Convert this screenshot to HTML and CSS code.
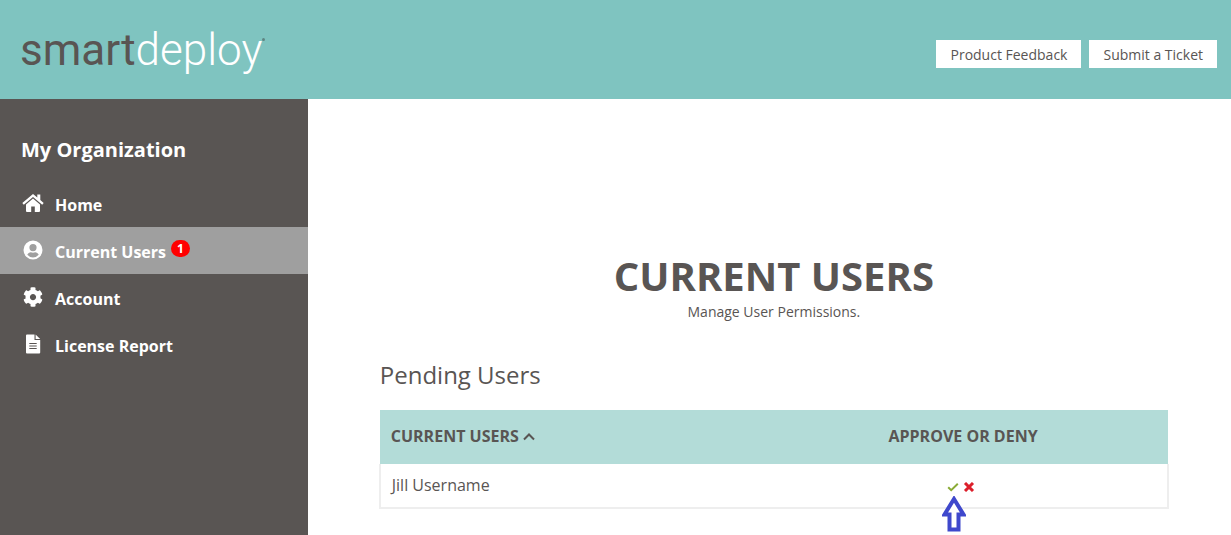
FILE: index.html
```html
<!DOCTYPE html>
<html lang="en">
<head>
<meta charset="utf-8">
<title>Current Users</title>
<link rel="stylesheet" href="styles.css">
</head>
<body>
<header class="topbar">
  <a class="logo" href="#"><span class="logo-dark">smart</span><span>deploy</span><span class="logo-mark"></span></a>
  <nav class="actions">
    <a class="action" href="#">Product Feedback</a>
    <a class="action" href="#">Submit a Ticket</a>
  </nav>
</header>
<div class="layout">
  <aside class="sidebar">
    <h2 class="side-title">My Organization</h2>
    <nav class="menu">
      <a class="item" href="#">
        <svg class="icon" viewBox="0 0 22 20"><path d="M11 1 .3 10l1.500 1.800L11 4.100l9.200 7.700 1.500-1.800L18.300 7V1.500h-3v3.100z"/><path d="M11 5.500 4 11.400V18q0 1 1 1h4.200v-5.500h3.600V19H17q1 0 1-1v-6.600z"/></svg>
        <span>Home</span>
      </a>
      <a class="item active" href="#">
        <svg class="icon" viewBox="0 0 22 20"><path fill-rule="evenodd" d="M11 .5a9.500 9.500 0 1 0 0 19 9.500 9.500 0 0 0 0-19zM11 4a3.600 3.600 0 1 1 0 7.200A3.600 3.600 0 0 1 11 4zM5.300 14.800c.8-1.700 2-2.600 3.500-2.600 1.500.6 2.900.6 4.400 0 1.500 0 2.700.9 3.500 2.600a7.400 7.400 0 0 1-11.400 0z"/></svg>
        <span>Current Users</span><span class="badge">1</span>
      </a>
      <a class="item" href="#">
        <svg class="icon" viewBox="0 0 512 512"><path d="M487.400 315.700l-42.600-24.600c4.300-23.200 4.300-47 0-70.200l42.600-24.600c4.900-2.800 7.100-8.600 5.500-14-11.100-35.600-30-67.800-54.700-94.600-3.800-4.100-10-5.100-14.800-2.300L380.800 110c-17.900-15.400-38.500-27.300-60.800-35.100V25.800c0-5.600-3.900-10.500-9.400-11.700-36.700-8.200-74.300-7.800-109.200 0-5.500 1.200-9.400 6.100-9.400 11.700V75c-22.200 7.900-42.800 19.800-60.800 35.100L88.700 85.500c-4.900-2.800-11-1.900-14.800 2.300-24.700 26.700-43.600 58.900-54.700 94.600-1.700 5.400.6 11.200 5.500 14L67.300 221c-4.300 23.200-4.300 47 0 70.200l-42.600 24.600c-4.900 2.800-7.100 8.600-5.500 14 11.100 35.600 30 67.800 54.700 94.600 3.800 4.100 10 5.100 14.800 2.300l42.600-24.600c17.900 15.400 38.500 27.300 60.800 35.100v49.200c0 5.600 3.900 10.500 9.400 11.700 36.700 8.200 74.300 7.800 109.200 0 5.500-1.200 9.400-6.100 9.400-11.700v-49.200c22.200-7.900 42.800-19.800 60.800-35.100l42.600 24.600c4.900 2.800 11 1.900 14.800-2.300 24.700-26.700 43.600-58.900 54.700-94.600 1.500-5.500-.7-11.300-5.600-14.100zM256 336c-44.100 0-80-35.900-80-80s35.900-80 80-80 80 35.900 80 80-35.900 80-80 80z"/></svg>
        <span>Account</span>
      </a>
      <a class="item" href="#">
        <svg class="icon" viewBox="0 0 22 20"><path fill-rule="evenodd" d="M5 .5h7.500V6h5.700v12.500q0 1-1 1H5q-1 0-1-1v-17q0-1 1-1zM7.300 9h7.400v1H7.300zm0 2.500h7.400v1H7.300zm0 2.500h7.400v1H7.300z"/><path d="M13.600.5 18.200 5h-4.600z"/></svg>
        <span>License Report</span>
      </a>
    </nav>
  </aside>
  <main class="main">
    <h1 class="title">CURRENT USERS</h1>
    <p class="subtitle">Manage User Permissions.</p>
    <h2 class="section">Pending Users</h2>
    <table class="users">
      <thead>
        <tr>
          <th class="name-col">CURRENT USERS <svg class="caret" viewBox="0 0 12 10"><path d="M1 7.500l5-5 5 5"/></svg></th>
          <th class="act-col">APPROVE OR DENY</th>
        </tr>
      </thead>
      <tbody>
        <tr>
          <td>Jill Username</td>
          <td class="act-col">
            <div class="choices">
              <button class="choice" type="button" aria-label="Approve">
                <svg class="mark approve" viewBox="0 0 12 10"><path d="M1.200 5.200 4.200 8.200 10.800 1.800"/></svg>
                <svg class="pointer" viewBox="0 0 24 36"><path d="M12 3 21.500 18.500H16.500V33.500H7.500V18.500H2.500z"/></svg>
              </button>
              <button class="choice" type="button" aria-label="Deny">
                <svg class="mark deny" viewBox="0 0 12 10"><path d="M2 1 10 9M10 1 2 9"/></svg>
              </button>
            </div>
          </td>
        </tr>
      </tbody>
    </table>
  </main>
</div>
</body>
</html>
```
FILE: styles.css
```css
* { box-sizing: border-box; }
body {
  margin: 0;
  min-height: 100vh;
  display: flex;
  flex-direction: column;
  font-family: "Open Sans", sans-serif;
  font-size: 16px;
  line-height: 24px;
  color: #595553;
  background: #fff;
}
a { color: inherit; text-decoration: none; }
h1, h2, p { margin: 0; }

.topbar {
  display: flex;
  justify-content: space-between;
  align-items: flex-start;
  padding: 20px 14px 19px 20px;
  background: #7fc4c0;
}
.logo {
  display: flex;
  font-family: Roboto, sans-serif;
  font-weight: 300;
  font-size: 44px;
  line-height: 60px;
  color: #fff;
}
.logo-dark { color: #595553; font-weight: 400; }
.logo-mark {
  width: 3px;
  height: 3px;
  margin-top: 18px;
  border-radius: 50%;
  background: #5f8582;
}
.actions { display: flex; gap: 8px; padding-top: 20px; }
.action {
  padding: 5px 14px 3px;
  font-size: 14px;
  line-height: 20px;
  background: #fff;
}

.layout { flex: 1; display: flex; }
.sidebar {
  flex: 0 0 25%;
  padding-top: 37px;
  color: #fff;
  background: #595553;
}
.side-title {
  padding: 0 21px;
  font-size: 20px;
  line-height: 28px;
  font-weight: 700;
}
.menu { padding-top: 16px; }
.item {
  display: flex;
  align-items: flex-start;
  padding: 13px 22px 10px;
  font-weight: 700;
}
.item.active { background: #9f9f9f; }
.icon { width: 22px; height: 20px; margin-right: 11px; fill: #fff; }
.badge {
  padding: 0 6px;
  margin-left: 5px;
  border-radius: 9px;
  font-size: 12px;
  line-height: 17px;
  background: #f00;
}

.main { flex: 1; padding: 153px 62px 26px 71px; }
.title {
  font-size: 40px;
  line-height: 48px;
  font-weight: 700;
  text-align: center;
}
.subtitle { font-size: 14px; text-align: center; }
.section {
  padding: 35px 1px 19px;
  font-size: 24px;
  line-height: 32px;
  font-weight: 400;
}
.users {
  width: 100%;
  border-collapse: collapse;
}
.users tbody {
  border: solid #eee;
  border-width: 0 2px 2px;
}
th {
  padding: 14px 11px 16px;
  font-weight: 700;
  text-align: left;
  background: #b3dcd8;
}
td { padding: 9px 11px 10px; }
.name-col { width: 48%; }
.users .act-col { text-align: center; }
.caret {
  width: 12px;
  height: 10px;
  fill: none;
  stroke: #595553;
  stroke-width: 2;
}
.choices {
  display: flex;
  justify-content: center;
  gap: 4px;
  padding: 4px 4px 0 0;
}
.choice {
  position: relative;
  display: flex;
  padding: 0;
  border: 0;
  background: none;
}
.mark { width: 12px; height: 10px; fill: none; }
.approve { stroke: #8aab35; stroke-width: 2; }
.deny { stroke: #dc1f2b; stroke-width: 3; }
.pointer {
  position: absolute;
  top: 14px;
  left: -5px;
  width: 24px;
  height: 36px;
  fill: #fff;
  stroke: #3f48cc;
  stroke-width: 4;
}
```
